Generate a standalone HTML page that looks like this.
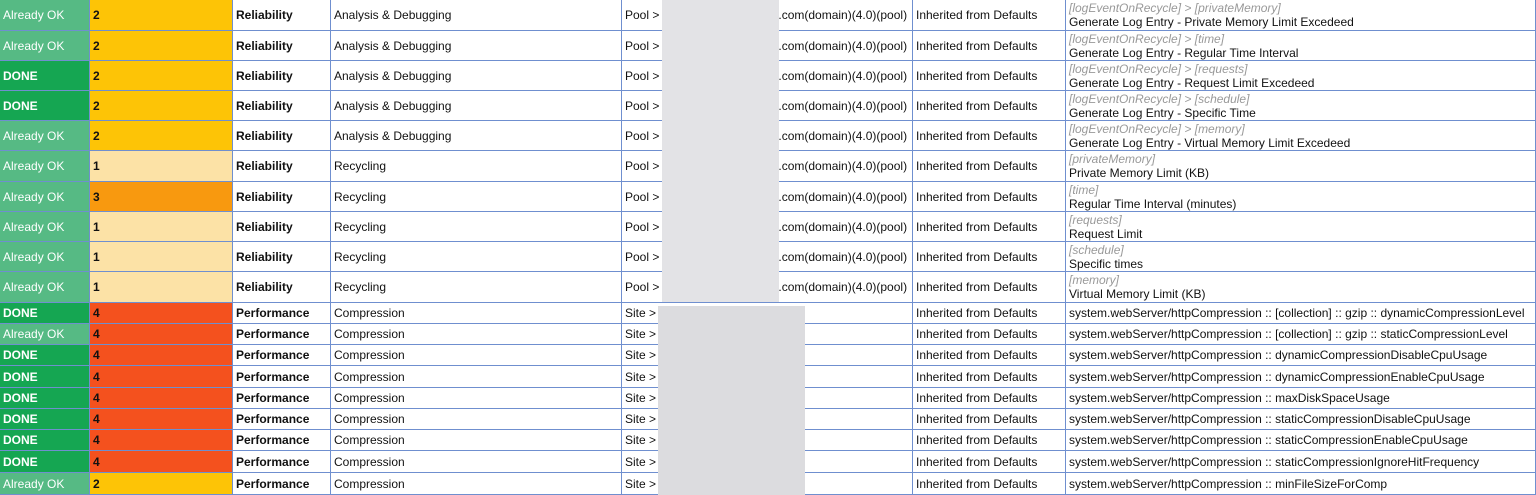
<!DOCTYPE html><html><head><style>
body{margin:0;width:1536px;height:495px;overflow:hidden;background:#fff;font-family:"Liberation Sans",Arial,sans-serif;font-size:12px;color:#111;position:relative}
.c{position:absolute;box-sizing:border-box;border-right:1px solid #6f8fcf;border-bottom:1px solid #6f8fcf;padding-left:3px;display:flex;align-items:center;white-space:nowrap;overflow:hidden}
.s{color:#fff}
.b{font-weight:bold}
.two{flex-direction:column;align-items:flex-start;justify-content:center;line-height:14px}
.g{color:#999;font-style:italic}
.blur{position:absolute;background:#e4e4e6}
</style></head><body>
<script>
const tall=[["Already OK","2","Analysis & Debugging","[logEventOnRecycle] > [privateMemory]","Generate Log Entry - Private Memory Limit Excedeed"],
["Already OK","2","Analysis & Debugging","[logEventOnRecycle] > [time]","Generate Log Entry - Regular Time Interval"],
["DONE","2","Analysis & Debugging","[logEventOnRecycle] > [requests]","Generate Log Entry - Request Limit Excedeed"],
["DONE","2","Analysis & Debugging","[logEventOnRecycle] > [schedule]","Generate Log Entry - Specific Time"],
["Already OK","2","Analysis & Debugging","[logEventOnRecycle] > [memory]","Generate Log Entry - Virtual Memory Limit Excedeed"],
["Already OK","1","Recycling","[privateMemory]","Private Memory Limit (KB)"],
["Already OK","3","Recycling","[time]","Regular Time Interval (minutes)"],
["Already OK","1","Recycling","[requests]","Request Limit"],
["Already OK","1","Recycling","[schedule]","Specific times"],
["Already OK","1","Recycling","[memory]","Virtual Memory Limit (KB)"]];
const shortR=[["DONE","4","dynamicCompressionLevel","[collection] :: gzip :: "],["Already OK","4","staticCompressionLevel","[collection] :: gzip :: "],["DONE","4","dynamicCompressionDisableCpuUsage",""],["DONE","4","dynamicCompressionEnableCpuUsage",""],["DONE","4","maxDiskSpaceUsage",""],["DONE","4","staticCompressionDisableCpuUsage",""],["DONE","4","staticCompressionEnableCpuUsage",""],["DONE","4","staticCompressionIgnoreHitFrequency",""],["Already OK","2","minFileSizeForComp",""]];
const pc={"1":"#fce2a6","2":"#fdc406","3":"#f8990f","4":"#f4511e"};
const sc={"DONE":"#15a652","Already OK":"#56ba84"};
const X=[0,90,233,331,622,913,1066,1536];
let h="";
function cell(i,t,hh,cls,st,txt){h+=`<div class="c ${cls}" style="left:${X[i]}px;top:${t}px;width:${X[i+1]-X[i]+(i==0?0:0)}px;height:${hh}px;${st}">${txt}</div>`}
let tops=[0,31,61,91,121,151,182,212,242,272,303];
tall.forEach((r,k)=>{let t=tops[k],hh=tops[k+1]-t;
cell(0,t,hh,"s","background:"+sc[r[0]]+(r[0]=="DONE"?";font-weight:bold":""),r[0]);
cell(1,t,hh,"b","background:"+pc[r[1]],r[1]);
cell(2,t,hh,"b","",r==0?"":"Reliability");
cell(3,t,hh,"","",r[2]);
cell(4,t,hh,"","","Pool ><span style='margin-left:119px'>.com(domain)(4.0)(pool)</span>");
cell(5,t,hh,"","","Inherited from Defaults");
cell(6,t,hh,"two","",`<span class="g">${r[3]}</span><span>${r[4]}</span>`);});
let st=[303,324,345,366,388,409,430,451,473,495];
shortR.forEach((r,k)=>{let t=st[k],hh=st[k+1]-t;
cell(0,t,hh,"s","background:"+sc[r[0]]+(r[0]=="DONE"?";font-weight:bold":""),r[0]);
cell(1,t,hh,"b","background:"+pc[r[1]],r[1]);
cell(2,t,hh,"b","","Performance");
cell(3,t,hh,"","","Compression");
cell(4,t,hh,"","","Site >");
cell(5,t,hh,"","","Inherited from Defaults");
cell(6,t,hh,"","","system.webServer/httpCompression :: "+r[3]+r[2]);});
h+='<div class="blur" style="left:662px;top:0;width:117px;height:302px;background:#e3e3e6"></div>';
h+='<div class="blur" style="left:658px;top:306px;width:147px;height:189px;background:#dcdcdf"></div>';
document.write(h);
</script>
</body></html>
